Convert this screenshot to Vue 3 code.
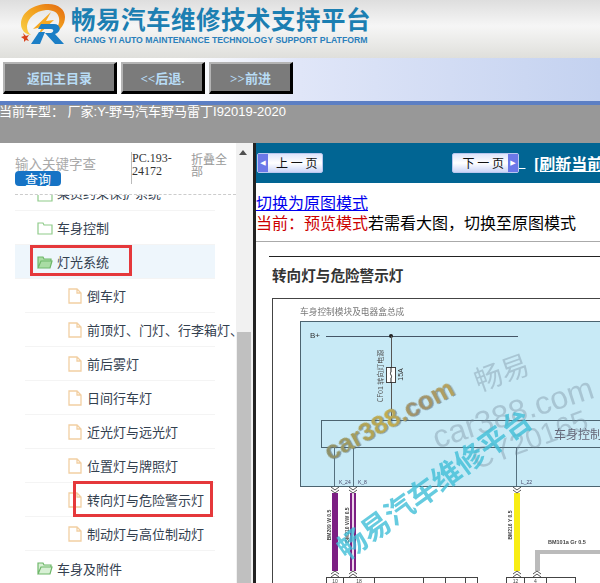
<script setup>
const treeTop = [{ name: '车身控制', open: false }, { name: '灯光系统', open: true, active: true }]
const lamps = ['倒车灯', '前顶灯、门灯、行李箱灯、', '前后雾灯', '日间行车灯', '近光灯与远光灯', '位置灯与牌照灯', '转向灯与危险警示灯', '制动灯与高位制动灯']
// wire ends on the diagram, x in sheet pixels
const topEnds = [62, 80, 244]
const bottomEnds = [62, 80, 244, 264]
</script>

<template>
  <div class="page">
    <header class="brand">
      <svg class="logo" viewBox="0 0 46 41" width="46" height="41">
        <defs>
          <linearGradient id="ring" x1="0" y1="1" x2="1" y2="0">
            <stop offset="0" stop-color="#f9d24a" />
            <stop offset="0.55" stop-color="#f2a01e" />
            <stop offset="1" stop-color="#e2660f" />
          </linearGradient>
        </defs>
        <path d="M1 20C1 8 14 0 28 0c11 0 17 6 17 13 0 8-5 13-11 17 3-5 6-11 5-16-1-6-6-8-13-8C15 7 8 14 7 22c0 4 1 7 4 9C5 30 1 26 1 20z" fill="url(#ring)" />
        <path d="M31 8 13 25l9-2-3 7 15-14-8 1z" fill="#f6a821" />
        <path d="M11 40l8-12h6l-5 12zM21 20h13c7 0 8 8 1 10l9 10h-9l-10-11h6c3-1 3-4 0-4H18z" fill="#1c7fc6" />
        <path d="M3 29l3 3 3-1-2 3 2 3-3-1-2 2v-3l-3-2 3-1z" fill="#d8431c" />
      </svg>
      <div class="brand-text">
        <div class="brand-cn">畅易汽车维修技术支持平台</div>
        <div class="brand-en">CHANG YI AUTO MAINTENANCE TECHNOLOGY SUPPORT PLATFORM</div>
      </div>
    </header>

    <nav class="toolbar">
      <button class="tool wide">返回主目录</button>
      <button class="tool">&lt;&lt;后退.</button>
      <button class="tool">&gt;&gt;前进</button>
    </nav>

    <div class="car-bar">当前车型： 厂家:Y-野马汽车野马雷丁I92019-2020</div>

    <main class="main">
      <aside class="side">
        <div class="side-scroll">
          <div class="search">
            <div class="search-box">
              <div class="hint">输入关键字查</div>
              <div class="query">查询</div>
            </div>
            <div class="code">PC.193-24172</div>
            <div class="fold">折叠全部</div>
          </div>
          <div class="tree">
            <div class="cut-wrap">
              <div class="cut-row">
                <svg class="folder" viewBox="0 0 16 14"><path d="M1 13V2h5l1 2h8v9z" fill="none" stroke="#8fcb8a" stroke-width="1.2" /></svg>
                <span>乘员约束保护系统</span>
              </div>
            </div>
            <div v-for="item in treeTop" :key="item.name" class="row parent" :class="{ active: item.active }">
              <svg class="folder" viewBox="0 0 16 14">
                <path v-if="item.open" d="M1 13V2h5l1 2h7v2H4l-3 7h12l2-7H4" fill="#a9dca4" stroke="#6fb76a" stroke-width="1.2" />
                <path v-else d="M1 13V2h5l1 2h8v9z" fill="none" stroke="#8fcb8a" stroke-width="1.2" />
              </svg>
              <span>{{ item.name }}</span>
            </div>
            <div v-for="lamp in lamps" :key="lamp" class="row child">
              <svg class="file" viewBox="0 0 14 16"><path d="M1 1h8l4 4v10H1zM9 1v4h4" fill="none" stroke="#f2cfa2" stroke-width="1.3" /></svg>
              <span class="label">{{ lamp }}</span>
            </div>
            <div class="row parent last">
              <svg class="folder" viewBox="0 0 16 14"><path d="M1 13V2h5l1 2h7v2H4l-3 7h12l2-7H4" fill="#d8f0d5" stroke="#6fb76a" stroke-width="1.2" /></svg>
              <span>车身及附件</span>
            </div>
          </div>
          <div class="mark mark-system"></div>
          <div class="mark mark-turn"></div>
        </div>
        <div class="scrollbar">
          <span class="arrow"></span>
          <span class="thumb"></span>
        </div>
      </aside>

      <section class="content">
        <div class="pager">
          <button class="page-btn"><i class="cap">◀</i>上 一 页</button>
          <div class="pager-right">
            <button class="page-btn next">下 一 页<i class="cap">▶</i></button>
            <a class="blank">&nbsp;&nbsp;</a>
            <a class="refresh">[刷新当前</a>
          </div>
        </div>
        <div class="mode">
          <a class="switch">切换为原图模式</a>
          <div><span class="red">当前：预览模式</span>若需看大图，切换至原图模式</div>
        </div>
        <article class="doc">
          <h2>转向灯与危险警示灯</h2>
          <div class="sheet">
            <div class="sheet-title">车身控制模块及电器盒总成</div>
            <div class="diagram">
              <span class="bplus">B+</span>
              <span class="rail"></span>
              <span class="dot"></span>
              <span class="drop"></span>
              <svg class="fuse" viewBox="0 0 10 16">
                <rect x="0.5" y="0.5" width="9" height="15" fill="#fff" stroke="#444" />
                <path d="M5 0v5C3 7 7 9 5 11v5" fill="none" stroke="#222" />
              </svg>
              <span class="fuse-a">15A</span>
              <span class="fuse-name">CF01 转向灯电源</span>
              <div class="module">车身控制模块</div>
              <span class="pin p1"></span>
              <span class="pin p2"></span>
              <span class="pin p3"></span>
              <span class="pin-name n1">K_24</span>
              <span class="pin-name n2">K_8</span>
              <span class="pin-name n3">L_22</span>
            </div>
            <span class="wire w1"></span>
            <span class="wire w2"></span>
            <span class="wire w3"></span>
            <span class="wire-h"></span>
            <span class="wire-v"></span>
            <svg v-for="x in topEnds" :key="'t' + x" class="chevron top" :style="{ left: x - 4 + 'px' }" viewBox="0 0 8 8">
              <path d="M0 1l4 3 4-3M0 4l4 3 4-3" fill="none" stroke="#555" />
            </svg>
            <svg v-for="x in bottomEnds" :key="'b' + x" class="chevron bottom" :style="{ left: x - 4 + 'px' }" viewBox="0 0 8 8">
              <path d="M0 4l4-3 4 3M0 7l4-3 4 3" fill="none" stroke="#555" />
            </svg>
            <span class="wire-name wn1">BM209 W 0.5</span>
            <span class="wire-name wn2">BM210 V/W 0.5</span>
            <span class="wire-name wn3">BM216 Y 0.5</span>
            <span class="wire-top">BM101a Gr 0.5</span>
            <div class="conn c1"><b>10</b><b>18</b><b></b><b></b><b></b></div>
            <div class="conn c2"><b>12</b><b>4</b><b></b></div>
            <span class="wm gray w-a">畅易</span>
            <span class="wm gray w-b">car388.com</span>
            <span class="wm gray w-c">CY20165</span>
            <span class="wm gold">car388.com</span>
            <span class="wm cyan">畅易汽车维修平台</span>
          </div>
        </article>
      </section>
    </main>
  </div>
</template>

<style scoped>
.page {
  width: 600px;
  height: 583px;
  overflow: hidden;
  font-family: "Liberation Serif", "Noto Sans CJK SC", serif;
  background: #fff;
}
.brand {
  height: 58px;
  display: flex;
  padding: 4px 0 0 20px;
  box-sizing: border-box;
  gap: 5px;
  background: linear-gradient(#dedede, #f6f6f6 45%, #dfdfdb);
}
.brand-text { padding-top: 1px; }
.brand-cn {
  font: 700 24.5px/28px "Noto Sans CJK SC", sans-serif;
  color: #1c7fb2;
  letter-spacing: 0.5px;
  white-space: nowrap;
}
.brand-en {
  font: 700 8.7px/12px "Liberation Sans", sans-serif;
  color: #2a7fbb;
  margin: 1px 0 0 3px;
  white-space: nowrap;
}
.toolbar {
  height: 43px;
  display: flex;
  gap: 4px;
  padding: 4px 0 0 3px;
  box-sizing: border-box;
  background: linear-gradient(90deg, #fff 30%, #e0e6f8 50%, #c4d2f0);
}
.tool {
  width: 114px;
  height: 32px;
  padding: 0;
  box-sizing: border-box;
  background: #7b7b7b;
  border-style: solid;
  border-width: 2px 3px 3px 2px;
  border-color: #b4b4b4 #000 #000 #b4b4b4;
  color: #b8dcf5;
  font: 700 13px "Liberation Serif", "Noto Sans CJK SC", serif;
}
.tool:not(.wide) { width: 84px; }
.car-bar {
  height: 42px;
  box-sizing: border-box;
  border-top: 4px solid #5c7fc4;
  background: #989898;
  color: #fff;
  font: 13px/14px "Liberation Sans", "Noto Sans CJK SC", sans-serif;
  text-indent: -1px;
  white-space: nowrap;
}
.main {
  height: 440px;
  display: flex;
}
.side {
  width: 256px;
  flex: none;
  display: flex;
  border-right: 3px solid #222;
  box-sizing: border-box;
}
.side-scroll {
  position: relative;
  width: 236px;
  flex: none;
  overflow: hidden;
}
.search {
  height: 52px;
  display: flex;
  border-bottom: 1px dashed #ccc;
  margin-left: 15px;
  font-size: 12px;
  box-sizing: border-box;
  padding-top: 12px;
}
.search-box { width: 116px; }
.hint {
  color: #aaa;
  white-space: nowrap;
  font: 13.5px/16px "Noto Sans CJK SC", sans-serif;
}
.query {
  width: 46px;
  height: 15px;
  border-radius: 4px;
  background: #1673c5;
  color: #fff;
  text-align: center;
  font: 13px/15px "Noto Sans CJK SC", sans-serif;
}
.code {
  width: 59px;
  height: 32px;
  margin-top: -3px;
  border-left: 1px solid #bbb;
  line-height: 13px;
  color: #333;
}
.fold {
  width: 38px;
  margin-top: -2px;
  color: #999;
  font: 12px/12px "Noto Sans CJK SC", sans-serif;
}
.tree {
  font: 13px "Noto Sans CJK SC", sans-serif;
  color: #33404f;
}
.cut-wrap {
  height: 15px;
  margin-left: 15px;
  width: 200px;
  border-bottom: 1px solid #f4f4f4;
}
.cut-row {
  height: 7px;
  padding-left: 22px;
  display: flex;
  gap: 4px;
  overflow: hidden;
  align-items: flex-end;
  white-space: nowrap;
}
.row {
  height: 34px;
  display: flex;
  align-items: center;
  margin-left: 15px;
  width: 200px;
  box-sizing: border-box;
  border-bottom: 1px solid #f4f4f4;
  white-space: nowrap;
}
.row.active { background: #eef6fc; }
.row.parent { padding-left: 22px; gap: 4px; }
.row.child { margin-left: 25px; width: 190px; padding-left: 43px; gap: 5px; }
.row.last { border-bottom: 0; }
.folder { width: 16px; height: 14px; flex: none; }
.file { width: 14px; height: 16px; flex: none; }
.mark {
  position: absolute;
  box-sizing: border-box;
  border: 3px solid #e5383b;
}
.mark-system { left: 30px; top: 102px; width: 102px; height: 31px; }
.mark-turn { left: 73px; top: 338px; width: 140px; height: 36px; }
.scrollbar {
  flex: 1;
  background: #f1f1f1;
  position: relative;
}
.arrow {
  position: absolute;
  left: 3px;
  top: 7px;
  border: 4px solid transparent;
  border-top: 0;
  border-bottom: 5px solid #505050;
}
.thumb {
  position: absolute;
  left: 1px;
  right: 2px;
  top: 189px;
  bottom: 0;
  background: #c0c0c0;
}
.content {
  flex: 1;
  min-width: 0;
  position: relative;
  overflow: hidden;
}
.pager {
  height: 40px;
  background: #016593;
  display: flex;
  align-items: center;
  padding-left: 1px;
  gap: 129px;
}
.pager-right { display: flex; align-items: center; white-space: nowrap; }
.page-btn {
  width: 66px;
  height: 20px;
  padding: 0;
  flex: none;
  background: linear-gradient(#dfe5fb, #fff 50%, #ccd6f7);
  border: 1px solid #b9c7ee;
  border-radius: 2px;
  color: #111;
  font: 12px/16px "Noto Sans CJK SC", sans-serif;
  display: flex;
  align-items: center;
  gap: 8px;
}
.page-btn.next { justify-content: flex-end; width: 67px; gap: 4px; }
.cap {
  width: 10px;
  height: 18px;
  background: #6b78e8;
  color: #fff;
  font: normal 7px/18px "DejaVu Sans", sans-serif;
  text-align: center;
}
.blank {
  width: 15px;
  color: #fff;
  font-size: 13px;
  text-decoration: underline;
}
.refresh {
  color: #fff;
  font: 700 16px "Liberation Serif", "Noto Sans CJK SC", serif;
  text-decoration: underline;
}
.mode {
  height: 59px;
  padding-top: 11px;
  box-sizing: border-box;
  font: 16px/21px "Liberation Serif", "Noto Sans CJK SC", serif;
  color: #000;
  border-bottom: 1px solid #aaa;
  white-space: nowrap;
}
.switch { color: #00e; text-decoration: underline; display: block; line-height: 19px; }
.red { color: #c00; }
.doc { padding: 14px 0 0 13px; }
.doc h2 {
  margin: 0;
  border-top: 1px solid #222;
  padding: 6px 0 0 3px;
  height: 42px;
  box-sizing: border-box;
  font: 700 14.6px/24px "Noto Sans CJK SC", sans-serif;
  color: #333;
}
.sheet {
  position: relative;
  margin-left: 3px;
  height: 300px;
  border: 1px solid #444;
  border-right: 0;
  font-family: "Liberation Sans", sans-serif;
  filter: blur(0.3px);
}
.sheet-title {
  font: 8.7px/12px "Noto Sans CJK SC", sans-serif;
  color: #777;
  margin: 7px 0 3px 27px;
}
.diagram {
  position: relative;
  height: 164px;
  margin-left: 27px;
  background: #c8eaf6;
  border: 1px solid #4c6470;
  border-right: 0;
}
.bplus { position: absolute; left: 9px; top: 9px; font-size: 8px; color: #333; }
.rail { position: absolute; left: 25px; top: 14px; width: 192px; height: 1px; background: #456; }
.dot { position: absolute; left: 88px; top: 12px; width: 4px; height: 4px; border-radius: 50%; background: #222; }
.drop { position: absolute; left: 90px; top: 14px; width: 1px; height: 84px; background: #555; }
.fuse { position: absolute; left: 85px; top: 45px; width: 10px; height: 16px; }
.fuse-a { position: absolute; left: 93px; top: 49px; font-size: 7px; transform: rotate(-90deg); color: #333; }
.fuse-name {
  position: absolute;
  left: 79px;
  top: 54px;
  font: 7px "Noto Sans CJK SC", sans-serif;
  color: #555;
  white-space: nowrap;
  transform: translate(-50%, -50%) rotate(-90deg);
}
.module {
  position: absolute;
  left: 20px;
  top: 98px;
  width: 279px;
  height: 28px;
  border: 1px solid #4c6470;
  border-right: 0;
  font: 12px/26px "Noto Sans CJK SC", sans-serif;
  color: #667;
  box-sizing: border-box;
  white-space: nowrap;
  overflow: hidden;
  padding-left: 232px;
}
.pin { position: absolute; top: 126px; width: 1px; height: 38px; background: #55707e; }
.p1 { left: 33px; }
.p2 { left: 52px; }
.p3 { left: 215px; }
.pin-name { position: absolute; top: 157px; font-size: 5px; color: #446; }
.n1 { left: 38px; }
.n2 { left: 57px; }
.n3 { left: 220px; }
.wire { position: absolute; top: 194px; width: 6px; height: 78px; }
.w1 { left: 59px; background: #7c1f83; }
.w2 { left: 77px; width: 2px; background: #ecd6ea; border-left: 2px solid #7c1f83; border-right: 2px solid #7c1f83; }
.w3 { left: 241px; background: #f8ed14; }
.wire-h { position: absolute; left: 262px; top: 251px; width: 70px; height: 4px; background: #bbb; }
.wire-v { position: absolute; left: 262px; top: 251px; width: 5px; height: 21px; background: #bbb; }
.chevron { position: absolute; width: 8px; height: 8px; }
.chevron.top { top: 187px; }
.chevron.bottom { top: 271px; }
.wire-name {
  position: absolute;
  top: 226px;
  font-size: 5px;
  font-weight: 700;
  color: #444;
  white-space: nowrap;
  transform: translate(-50%, -50%) rotate(-90deg);
}
.wn1 { left: 56px; }
.wn2 { left: 74px; }
.wn3 { left: 237px; }
.wire-top { position: absolute; left: 275px; top: 240px; font-size: 5.5px; font-weight: 700; color: #444; white-space: nowrap; }
.conn { position: absolute; top: 278px; height: 20px; border: 1px solid #444; display: flex; box-sizing: border-box; }
.conn b { font-size: 5px; font-weight: 400; color: #444; text-align: center; border-right: 1px solid #444; box-sizing: border-box; }
.c1 { left: 53px; width: 152px; }
.c1 b:nth-child(1) { width: 17px; }
.c1 b:nth-child(2) { width: 31px; }
.c1 b:nth-child(3) { width: 49px; }
.c1 b:nth-child(4) { width: 22px; }
.c1 b:nth-child(5) { width: 20px; }
.c2 { left: 233px; width: 70px; }
.c2 b:nth-child(1) { width: 18px; }
.c2 b:nth-child(2) { width: 22px; }
.c2 b:nth-child(3) { width: 28px; border-right: 0; }
.wm { position: absolute; white-space: nowrap; pointer-events: none; }
.gray { color: rgba(110, 130, 145, 0.35); }
.w-a { left: 228px; top: 72px; font: 28px "Noto Sans CJK SC", sans-serif; transform: translate(-50%, -50%) rotate(-20deg); }
.w-b { left: 240px; top: 114px; font: 32px "Liberation Sans", sans-serif; transform: translate(-50%, -50%) rotate(-18deg); }
.w-c { left: 257px; top: 141px; font: 29px "Liberation Sans", sans-serif; transform: translate(-50%, -50%) rotate(-20deg); }
.gold {
  left: 116px;
  top: 121px;
  font: 700 26px "Liberation Sans", sans-serif;
  background: linear-gradient(90deg, #8b8f6a, #c3ad4c 50%, #9a8f70 70%, #b7a35b);
  -webkit-background-clip: text;
  background-clip: text;
  color: transparent;
  filter: drop-shadow(1px 1px 0 rgba(70, 90, 110, 0.55));
  transform: translate(-50%, -50%) rotate(-28deg);
}
.cyan {
  left: 160px;
  top: 183px;
  font: 700 29px "Noto Sans CJK SC", sans-serif;
  color: rgba(64, 190, 215, 0.8);
  transform: translate(-50%, -50%) rotate(-36deg);
}
</style>
